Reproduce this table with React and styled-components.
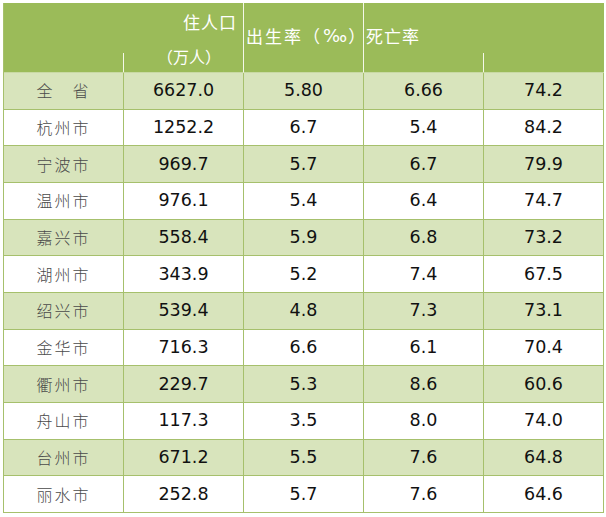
import styled, { createGlobalStyle } from "styled-components";

const GlobalStyle = createGlobalStyle`
  html, body {
    margin: 0;
    padding: 0;
    background: #ffffff;
  }
`;

const rows = [
  ["全　省", "6627.0", "5.80", "6.66", "74.2"],
  ["杭州市", "1252.2", "6.7", "5.4", "84.2"],
  ["宁波市", "969.7", "5.7", "6.7", "79.9"],
  ["温州市", "976.1", "5.4", "6.4", "74.7"],
  ["嘉兴市", "558.4", "5.9", "6.8", "73.2"],
  ["湖州市", "343.9", "5.2", "7.4", "67.5"],
  ["绍兴市", "539.4", "4.8", "7.3", "73.1"],
  ["金华市", "716.3", "6.6", "6.1", "70.4"],
  ["衢州市", "229.7", "5.3", "8.6", "60.6"],
  ["舟山市", "117.3", "3.5", "8.0", "74.0"],
  ["台州市", "671.2", "5.5", "7.6", "64.8"],
  ["丽水市", "252.8", "5.7", "7.6", "64.6"],
];

const Page = styled.div`
  padding: 3px 0 0 3px;
  width: 606px;
  height: 517px;
  box-sizing: border-box;
`;

const Table = styled.div`
  width: 600px;
  display: grid;
  grid-template-columns: 120px 120px 120px 120px 120px;
  grid-template-rows: 70px;
  grid-auto-rows: 36.67px;
  border-left: 1px solid #a6c06c;
  box-sizing: border-box;
`;

const HeadCell = styled.div`
  position: relative;
  background: #9bbb59;
  color: #ffffff;
  font-family: "Noto Sans CJK SC", "Noto Sans", sans-serif;
  font-size: 17px;
  font-weight: 400;
  box-sizing: border-box;
  border-right: ${(p) => (p.$full ? "1px solid #f4f8ea" : "none")};
  border-bottom: 1px solid #c9d9a4;
  display: flex;
  flex-direction: ${(p) => (p.$top ? "column" : "row")};
  justify-content: ${(p) => (p.$top ? "flex-start" : "flex-start")};
  align-items: ${(p) => (p.$top ? "flex-end" : "center")};
  padding: ${(p) => (p.$top ? "2px 6px 0 0" : "0 0 4px 2px")};
  line-height: 34px;
  white-space: nowrap;
  letter-spacing: ${(p) => (p.$wide ? "2px" : "1px")};

  &::after {
    content: "";
    display: ${(p) => (p.$stub ? "block" : "none")};
    position: absolute;
    right: 0;
    bottom: 0;
    width: 1px;
    height: 19px;
    background: #f4f8ea;
  }
`;

const SubLine = styled.span`
  margin-right: 16px;
  font-size: 16px;
  letter-spacing: 0;
`;

const PerMille = styled.span`
  font-family: "DejaVu Sans", sans-serif;
  font-size: 18px;
  letter-spacing: 0;
  margin: 0 1px;
`;

const Cell = styled.div`
  background: ${(p) => (p.$shade ? "#d8e4bc" : "#ffffff")};
  border-right: 1px solid #a6c06c;
  border-bottom: 1px solid #a6c06c;
  box-sizing: border-box;
  display: flex;
  align-items: center;
  justify-content: center;
  font-family: "DejaVu Sans", Verdana, sans-serif;
  font-size: 17.5px;
  color: #111111;
  padding-bottom: 1px;
`;

const NameCell = styled(Cell)`
  font-family: "Noto Sans CJK SC", "Noto Sans", sans-serif;
  font-size: 16px;
  color: #4a4a4a;
  letter-spacing: 2px;
  font-weight: 300;
`;

export default function App() {
  return (
    <Page>
      <GlobalStyle />
      <Table>
        <HeadCell $stub />
        <HeadCell $full $top>
          住人口
          <SubLine>（万人）</SubLine>
        </HeadCell>
        <HeadCell $full $wide>
          出生率（<PerMille>‰</PerMille>）
        </HeadCell>
        <HeadCell $stub>死亡率</HeadCell>
        <HeadCell />
        {rows.map((row, i) =>
          row.map((value, j) =>
            j === 0 ? (
              <NameCell key={`${i}-${j}`} $shade={i % 2 === 0}>
                {value}
              </NameCell>
            ) : (
              <Cell key={`${i}-${j}`} $shade={i % 2 === 0}>
                {value}
              </Cell>
            )
          )
        )}
      </Table>
    </Page>
  );
}
